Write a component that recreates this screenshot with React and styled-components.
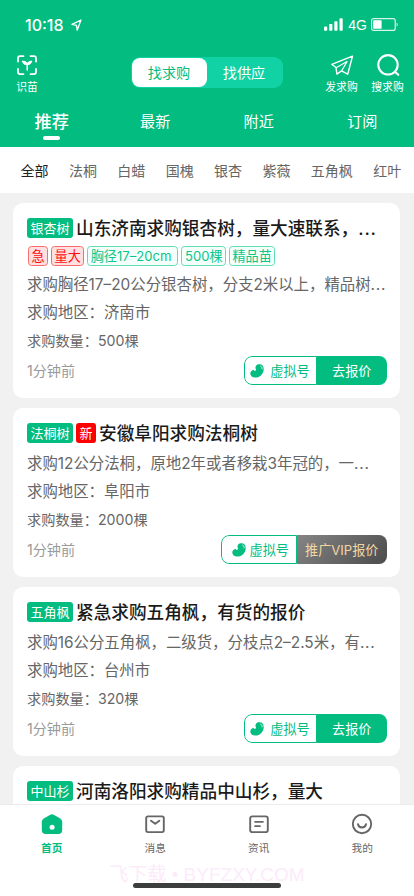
import React from 'react';
import styled, { createGlobalStyle, css } from 'styled-components';

const GREEN = '#02bc80';

const GlobalStyle = createGlobalStyle`
  * {
    box-sizing: border-box;
  }

  body {
    margin: 0;
    overflow: hidden;
    font-family: Inter, 'Noto Sans CJK SC', sans-serif;
  }
`;

const Screen = styled.div`
  display: flex;
  flex-direction: column;
  width: 414px;
  height: 896px;
  background: #f1f1f1;
  overflow: hidden;
`;

const Header = styled.header`
  flex: none;
  height: 147px;
  background: ${GREEN};
  color: #fff;
`;

const StatusBar = styled.div`
  display: flex;
  align-items: center;
  height: 49px;
  padding: 0 15px 0 25px;
`;

const Clock = styled.span`
  font-size: 16px;
  font-weight: 500;
  margin-right: 7px;
`;

const StatusRight = styled.div`
  display: flex;
  align-items: center;
  margin-left: auto;
`;

const Network = styled.span`
  font-family: 'Liberation Sans', sans-serif;
  font-size: 14px;
  margin: 0 4px 0 5px;
`;

const TopBar = styled.div`
  display: flex;
  justify-content: space-between;
  align-items: flex-start;
  height: 50px;
  padding: 4px 10px 0 16px;
`;

const IconAction = styled.div`
  display: flex;
  flex-direction: column;
  align-items: center;
  width: ${(props) => props.$width};
  font-size: 10.8px;
  line-height: 18px;
  white-space: nowrap;

  svg {
    display: block;
    height: 24px;
    margin-bottom: 1.5px;
  }
`;

const Actions = styled.div`
  display: flex;
  gap: 13px;
`;

const Segment = styled.div`
  display: flex;
  width: 152px;
  height: 31px;
  margin: 4px 0 0 50px;
  padding: 1px;
  border-radius: 9px;
  background: #11d2a5;
`;

const SegmentItem = styled.div`
  flex: 1;
  height: 29px;
  border-radius: 8px;
  font-size: 14.2px;
  line-height: 29px;
  text-align: center;
  color: ${(props) => (props.$active ? GREEN : '#fff')};
  background: ${(props) => (props.$active ? '#fff' : 'transparent')};
`;

const Tabs = styled.div`
  display: flex;
  height: 48px;
  padding-top: 11px;
`;

const Tab = styled.div`
  flex: 1;
  display: flex;
  flex-direction: column;
  align-items: center;
  font-size: ${(props) => (props.$active ? '17.2px' : '15.2px')};
  font-weight: ${(props) => (props.$active ? 500 : 400)};
  line-height: 24px;

  &::after {
    content: '';
    display: ${(props) => (props.$active ? 'block' : 'none')};
    width: 17px;
    height: 4px;
    margin-top: 2px;
    border-radius: 2px;
    background: #fff;
  }
`;

const Categories = styled.div`
  flex: none;
  display: flex;
  align-items: center;
  gap: 20.4px;
  height: 46px;
  padding-left: 20.5px;
  background: #fff;
  overflow: hidden;
`;

const Category = styled.span`
  flex: none;
  font-size: 14px;
  color: ${(props) => (props.$active ? '#222' : '#666')};
`;

const List = styled.main`
  flex: 1;
  min-height: 0;
  display: flex;
  flex-direction: column;
  gap: 10px;
  padding: 10px 14px 0 13px;
  overflow: hidden;
`;

const Card = styled.article`
  flex: none;
  padding: 13px 13px 13px 14px;
  border-radius: 10px;
  background: #fff;
`;

const TitleRow = styled.div`
  display: flex;
  align-items: center;
  height: 24px;
`;

const Species = styled.span`
  flex: none;
  height: 20px;
  margin-right: 3px;
  padding: 0 3.5px;
  border-radius: 3px;
  font-size: 13px;
  line-height: 20px;
  color: #fff;
  background: ${(props) => (props.$hot ? '#fe0000' : GREEN)};
`;

const Title = styled.h2`
  margin: 0;
  padding-top: 1px;
  font-size: 17.65px;
  font-weight: 500;
  line-height: 25px;
  color: #1a1a1a;
  white-space: nowrap;
`;

const Ellipsis = styled.span`
  letter-spacing: 0.8px;
`;

const Chips = styled.div`
  display: flex;
  gap: 3px;
  margin: 6px 0 0 1px;
`;

const Chip = styled.span`
  height: 20px;
  padding: 0 2.5px;
  border: 1px solid ${(props) => (props.$hot ? '#fb6b6d' : '#5fdcb5')};
  border-radius: 3.5px;
  font-size: 13.1px;
  line-height: 18.5px;
  white-space: nowrap;
  color: ${(props) => (props.$hot ? '#fc0d12' : '#0cc58c')};
  background: ${(props) => (props.$hot ? '#ffe0e1' : '#f4fffb')};

  &:nth-child(3) {
    padding-right: 6px;
  }
`;

const Description = styled.p`
  margin: 5px 0 0;
  font-size: 15.4px;
  line-height: 28px;
  color: #666;
  white-space: nowrap;
`;

const Line = styled.p`
  margin: 0;
  font-size: ${(props) => (props.$small ? '14.2px' : '15.4px')};
  line-height: ${(props) => (props.$small ? '27px' : '28px')};
  color: #666;
`;

const CardFooter = styled.div`
  display: flex;
  align-items: center;
  justify-content: space-between;
  height: 29px;
  margin-top: 2px;
`;

const Time = styled.span`
  font-size: 14.1px;
  line-height: 20px;
  padding-top: 1px;
  color: #999;
`;

const ButtonGroup = styled.div`
  display: flex;
  height: 29px;
  border-radius: 8px;
  overflow: hidden;
`;

const VirtualButton = styled.button`
  display: flex;
  align-items: center;
  justify-content: center;
  gap: ${(props) => (props.$vip ? '4px' : '6px')};
  width: ${(props) => (props.$vip ? '75.5px' : '73px')};
  padding: 0 0 0 ${(props) => (props.$vip ? '3px' : '0')};
  border: 1.5px solid ${GREEN};
  border-radius: 8px 0 0 8px;
  background: #fff;
  font-family: inherit;
  font-size: 13.1px;
  color: ${GREEN};
  white-space: nowrap;
`;

const QuoteButton = styled.button`
  width: 70.5px;
  padding: 0 0 1px;
  border: 0;
  background: ${GREEN};
  font-family: inherit;
  font-size: 13.1px;
  color: #fff;
  white-space: nowrap;

  ${(props) =>
    props.$vip &&
    css`
      width: 90.5px;
      background: linear-gradient(135deg, #858585, #4d4c4c);
      color: #f2d6a3;
    `}
`;

const BottomNav = styled.nav`
  flex: none;
  position: relative;
  display: flex;
  height: 92px;
  padding-top: 8px;
  border-top: 1px solid #ececec;
  background: #fff;
`;

const NavItem = styled.div`
  flex: 1;
  display: flex;
  flex-direction: column;
  align-items: center;
  font-size: 10.7px;
  font-weight: ${(props) => (props.$active ? 700 : 400)};
  line-height: 16px;
  color: ${(props) => (props.$active ? GREEN : '#666')};

  svg {
    display: block;
    margin-bottom: 5.5px;
  }
`;

const Watermark = styled.span`
  position: absolute;
  left: 0;
  right: 0;
  top: 57px;
  font-family: 'Liberation Sans', 'Noto Sans CJK SC', sans-serif;
  font-size: 19px;
  line-height: 26px;
  text-align: center;
  color: #fcebfa;
`;

const HomeIndicator = styled.i`
  position: absolute;
  left: 133px;
  top: 77.5px;
  width: 148px;
  height: 5.5px;
  border-radius: 3px;
  background: #3c3d3d;
`;

const LocationIcon = () => (
  <svg width="11" height="12" viewBox="0 0 11 12" fill="none" stroke="#fff" strokeWidth="1.3" strokeLinejoin="round">
    <path d="M10 1 1 5.4l4.5.9.7 4.9z" />
  </svg>
);

const SignalIcon = () => (
  <svg width="19" height="13" viewBox="0 0 19 13" fill="#fff">
    <rect x="0" y="8.5" width="3.2" height="4.2" rx="0.8" />
    <rect x="5.2" y="6" width="3.2" height="6.7" rx="0.8" />
    <rect x="10.3" y="3.2" width="3.2" height="9.5" rx="0.8" />
    <rect x="15.5" y="0.3" width="3.2" height="12.4" rx="0.8" />
  </svg>
);

const BatteryIcon = () => (
  <svg width="28" height="13" viewBox="0 0 28 13" fill="none">
    <rect x="0.6" y="0.6" width="23.6" height="11.8" rx="2" stroke="#d4f5e9" strokeWidth="1.2" />
    <rect x="2.2" y="2.2" width="8.4" height="8.6" rx="0.6" fill="#fff" />
    <path d="M25.600 4.400c1.500.6 1.500 3.600 0 4.200z" fill="#d4f5e9" />
  </svg>
);

const ScanIcon = () => (
  <svg width="22" height="24" viewBox="0 0 22 24" fill="none" stroke="#fff" strokeWidth="1.8" strokeLinecap="round">
    <path d="M2 8.5V5.2q0-2 2-2h3.5M14.5 3.2H18q2 0 2 2v3.3M20 15.8v3.3q0 2-2 2h-3.5M7.5 21.1H4q-2 0-2-2v-3.3" />
    <path d="M11.2 17V11.500" strokeWidth="1.5" />
    <path
      d="M6.6 8.300c2.400-.5 4.400.6 4.600 3.200-2.700.4-4.400-.6-4.600-3.200zM15.500 8.300c-2.400-.3-4.100.900-4.300 3.200 2.600.3 4.200-.9 4.300-3.200z"
      fill="#fff"
      strokeWidth="1"
      strokeLinejoin="round"
    />
  </svg>
);

const SendIcon = () => (
  <svg width="24" height="24" viewBox="0 0 24 24" fill="none" stroke="#fff" strokeWidth="1.4" strokeLinejoin="round" strokeLinecap="round">
    <path d="M22.5 3.2 1.800 11.300l4.200 3.200.9 6.600 4.600-3.200 6.200 3.300z" />
    <path d="M17 8.600 6.500 14.500M17 8.600l-5.300 9.100" strokeWidth="1.200" />
  </svg>
);

const SearchIcon = () => (
  <svg width="24" height="24" viewBox="0 0 24 24" fill="none" stroke="#fff" strokeWidth="2.1" strokeLinecap="round">
    <circle cx="12" cy="11.800" r="9.700" />
    <path d="m19.500 19.200 2.800 2.600" />
  </svg>
);

const BeanIcon = () => (
  <svg width="14" height="14" viewBox="0 0 14 14">
    <path
      d="M7.600.6c3.600-1.400 6.300 1 6.100 4.800C13.400 10 9.900 13.600 5.400 13.600 2.200 13.600.2 11.800.3 9.400.4 7.200 1.900 5.900 3.600 5.900c.5 1 1.300 1.200 2 .7.8-.6.500-1.600-.1-2.300C5.300 2.700 6.100 1.200 7.600.6z"
      fill={GREEN}
    />
    <path d="M10.700 2.200c1.100.4 1.600 1.400 1.400 2.700" fill="none" stroke="#fff" strokeWidth="0.8" strokeLinecap="round" />
  </svg>
);

const HomeIcon = () => (
  <svg width="22" height="22" viewBox="0 0 22 22">
    <path
      d="M9.300 1.800q1.700-.9 3.400 0l6.500 3.700q1.800 1.200 2 3.200v8.200q0 4-4 4H4.800q-4 0-4-4V8.700q.2-2 2-3.200z"
      fill={GREEN}
    />
    <circle cx="11.100" cy="14.200" r="2.500" fill="#fff" />
  </svg>
);

const MessageIcon = () => (
  <svg width="22" height="22" viewBox="0 0 22 22" fill="none" stroke="#666" strokeWidth="1.900" strokeLinecap="round" strokeLinejoin="round">
    <rect x="2.200" y="3.400" width="17.600" height="15.700" rx="1.800" />
    <path d="m7 7.800 4.200 3 4.200-3" />
  </svg>
);

const NewsIcon = () => (
  <svg width="22" height="22" viewBox="0 0 22 22" fill="none" stroke="#666" strokeWidth="1.900" strokeLinecap="round">
    <rect x="2.200" y="3.400" width="17.600" height="15.700" rx="2.200" />
    <path d="M7 8.800h8M7 13.200h5" strokeWidth="1.700" />
  </svg>
);

const ProfileIcon = () => (
  <svg width="22" height="22" viewBox="0 0 22 22" fill="none" stroke="#666" strokeWidth="1.900" strokeLinecap="round">
    <circle cx="11" cy="11" r="9.200" />
    <path d="M7 11.300c.8 4.200 7.200 4.200 8 0" />
  </svg>
);

const categories = ['全部', '法桐', '白蜡', '国槐', '银杏', '紫薇', '五角枫', '红叶'];

const posts = [
  {
    species: '银杏树',
    title: '山东济南求购银杏树，量大速联系，',
    truncated: true,
    chips: [
      { text: '急', hot: true },
      { text: '量大', hot: true },
      { text: '胸径17–20cm' },
      { text: '500棵' },
      { text: '精品苗' },
    ],
    description: '求购胸径17–20公分银杏树，分支2米以上，精品树',
    area: '济南市',
    amount: '500棵',
  },
  {
    species: '法桐树',
    isNew: true,
    title: '安徽阜阳求购法桐树',
    description: '求购12公分法桐，原地2年或者移栽3年冠的，一',
    area: '阜阳市',
    amount: '2000棵',
    vip: true,
  },
  {
    species: '五角枫',
    title: '紧急求购五角枫，有货的报价',
    description: '求购16公分五角枫，二级货，分枝点2–2.5米，有',
    area: '台州市',
    amount: '320棵',
  },
  {
    species: '中山杉',
    title: '河南洛阳求购精品中山杉，量大',
  },
];

function Post({ post }) {
  return (
    <Card>
      <TitleRow>
        <Species>{post.species}</Species>
        {post.isNew && <Species $hot>新</Species>}
        <Title>
          {post.title}
          {post.truncated && <Ellipsis>...</Ellipsis>}
        </Title>
      </TitleRow>
      {post.chips && (
        <Chips>
          {post.chips.map((chip) => (
            <Chip key={chip.text} $hot={chip.hot}>
              {chip.text}
            </Chip>
          ))}
        </Chips>
      )}
      {post.description && (
        <>
          <Description>
            {post.description}
            <Ellipsis>...</Ellipsis>
          </Description>
          <Line>求购地区：{post.area}</Line>
          <Line $small>求购数量：{post.amount}</Line>
          <CardFooter>
            <Time>1分钟前</Time>
            <ButtonGroup>
              <VirtualButton $vip={post.vip}>
                <BeanIcon />
                虚拟号
              </VirtualButton>
              <QuoteButton $vip={post.vip}>{post.vip ? '推广VIP报价' : '去报价'}</QuoteButton>
            </ButtonGroup>
          </CardFooter>
        </>
      )}
    </Card>
  );
}

export default function App() {
  return (
    <Screen>
      <GlobalStyle />
      <Header>
        <StatusBar>
          <Clock>10:18</Clock>
          <LocationIcon />
          <StatusRight>
            <SignalIcon />
            <Network>4G</Network>
            <BatteryIcon />
          </StatusRight>
        </StatusBar>
        <TopBar>
          <IconAction $width="22px">
            <ScanIcon />
            识苗
          </IconAction>
          <Segment>
            <SegmentItem $active>找求购</SegmentItem>
            <SegmentItem>找供应</SegmentItem>
          </Segment>
          <Actions>
            <IconAction $width="33px">
              <SendIcon />
              发求购
            </IconAction>
            <IconAction $width="33px">
              <SearchIcon />
              搜求购
            </IconAction>
          </Actions>
        </TopBar>
        <Tabs>
          <Tab $active>推荐</Tab>
          <Tab>最新</Tab>
          <Tab>附近</Tab>
          <Tab>订阅</Tab>
        </Tabs>
      </Header>
      <Categories>
        {categories.map((name, index) => (
          <Category key={name} $active={index === 0}>
            {name}
          </Category>
        ))}
      </Categories>
      <List>
        {posts.map((post) => (
          <Post key={post.species} post={post} />
        ))}
      </List>
      <BottomNav>
        <NavItem $active>
          <HomeIcon />
          首页
        </NavItem>
        <NavItem>
          <MessageIcon />
          消息
        </NavItem>
        <NavItem>
          <NewsIcon />
          资讯
        </NavItem>
        <NavItem>
          <ProfileIcon />
          我的
        </NavItem>
        <Watermark>飞下载 • BYFZXY.COM</Watermark>
        <HomeIndicator />
      </BottomNav>
    </Screen>
  );
}
